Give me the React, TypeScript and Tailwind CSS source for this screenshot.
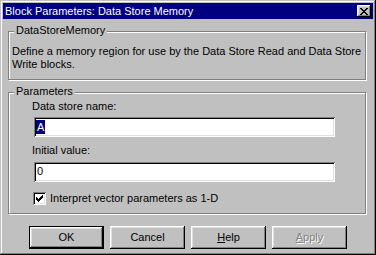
const raised =
  'shadow-[inset_-1px_-1px_#000,inset_1px_1px_#fff,inset_-2px_-2px_#808080,inset_2px_2px_#dfdfdf]';
const sunken =
  'shadow-[inset_1px_1px_#808080,inset_-1px_-1px_#fff,inset_2px_2px_#000,inset_-2px_-2px_#dfdfdf]';

function CloseGlyph() {
  // 8x7 pixel "x" as in the classic caption button
  const px: [number, number][] = [
    [0, 0], [1, 0], [6, 0], [7, 0],
    [1, 1], [2, 1], [5, 1], [6, 1],
    [2, 2], [3, 2], [4, 2], [5, 2],
    [3, 3], [4, 3],
    [2, 4], [3, 4], [4, 4], [5, 4],
    [1, 5], [2, 5], [5, 5], [6, 5],
    [0, 6], [1, 6], [6, 6], [7, 6],
  ];
  return (
    <svg width="8" height="7" viewBox="0 0 8 7" shapeRendering="crispEdges">
      {px.map(([x, y]) => (
        <rect key={`${x}-${y}`} x={x} y={y} width="1" height="1" fill="#000" />
      ))}
    </svg>
  );
}

function CheckGlyph() {
  const px: [number, number][] = [
    [6, 0],
    [5, 1], [6, 1],
    [0, 2], [4, 2], [5, 2], [6, 2],
    [0, 3], [1, 3], [3, 3], [4, 3], [5, 3],
    [0, 4], [1, 4], [2, 4], [3, 4], [4, 4],
    [1, 5], [2, 5], [3, 5],
    [2, 6],
  ];
  return (
    <svg width="7" height="7" viewBox="0 0 7 7" shapeRendering="crispEdges">
      {px.map(([x, y]) => (
        <rect key={`${x}-${y}`} x={x} y={y} width="1" height="1" fill="#000" />
      ))}
    </svg>
  );
}

function GroupBox({ title, className, children }: { title: string; className?: string; children: React.ReactNode }) {
  return (
    <div
      className={`relative ml-[5px] w-[358px] border border-[#808080] shadow-[1px_1px_0_#fff,inset_1px_1px_0_#fff] ${className ?? ''}`}
    >
      <span className="absolute left-[5px] top-[-8px] bg-[#c0c0c0] px-[2px] leading-[13px]">{title}</span>
      {children}
    </div>
  );
}

function Button({ children, isDefault, disabled }: { children: React.ReactNode; isDefault?: boolean; disabled?: boolean }) {
  return (
    <div
      className={`flex h-[23px] w-[75px] items-center justify-center bg-[#c0c0c0] leading-[13px] ${raised} ${
        isDefault ? 'border border-black' : ''
      } ${disabled ? 'text-[#808080] [text-shadow:1px_1px_0_#fff]' : 'text-black'}`}
    >
      {children}
    </div>
  );
}

export default function App() {
  return (
    <div
      className="h-[255px] w-[376px] bg-[#c0c0c0] p-[3px] text-[11px] text-black shadow-[inset_-1px_-1px_#000,inset_1px_1px_#c0c0c0,inset_-2px_-2px_#808080,inset_2px_2px_#fff]"
      style={{ fontFamily: '"Liberation Sans", Arial, sans-serif' }}
    >
      {/* Title bar */}
      <div className="flex h-[16px] items-center justify-between bg-[#000080] pl-[2px] pr-[2px] text-white">
        <span className="leading-[13px]">Block Parameters: Data Store Memory</span>
        <div className={`flex h-[12px] w-[14px] items-center justify-center bg-[#c0c0c0] ${raised}`}>
          <CloseGlyph />
        </div>
      </div>

      {/* Description */}
      <GroupBox title="DataStoreMemory" className="mt-[12px] pb-[8px] pl-[3px] pt-[13px]">
        <p className="leading-[13px]">
          Define a memory region for use by the Data Store Read and Data Store
          <br />
          Write blocks.
        </p>
      </GroupBox>

      {/* Parameters */}
      <GroupBox title="Parameters" className="mt-[12px] pb-[8px] pl-[23px] pt-[7px]">
        <div className="leading-[13px]">Data store name:</div>
        <div className={`ml-[2px] mt-[4px] h-[20px] w-[301px] bg-white pl-[2px] pt-[2px] ${sunken}`}>
          <span className="inline-block h-[14px] bg-[#000080] pl-[1px] pr-[1px] leading-[14px] text-white">A</span>
        </div>
        <div className="mt-[7px] leading-[13px]">Initial value:</div>
        <div className={`ml-[2px] mt-[5px] h-[20px] w-[301px] bg-white pl-[3px] pt-[2px] leading-[14px] ${sunken}`}>
          0
        </div>
        <div className="ml-[1px] mt-[10px] flex items-center gap-[4px]">
          <div className={`flex h-[13px] w-[13px] items-center justify-center bg-white ${sunken}`}>
            <CheckGlyph />
          </div>
          <span className="leading-[13px]">Interpret vector parameters as 1-D</span>
        </div>
      </GroupBox>

      {/* Buttons */}
      <div className="mt-[12px] flex justify-center gap-[6px]">
        <Button isDefault>OK</Button>
        <Button>Cancel</Button>
        <Button>
          <span>
            <u className="underline-offset-1">H</u>elp
          </span>
        </Button>
        <Button disabled>
          <span>
            <u className="underline-offset-1">A</u>pply
          </span>
        </Button>
      </div>
    </div>
  );
}
